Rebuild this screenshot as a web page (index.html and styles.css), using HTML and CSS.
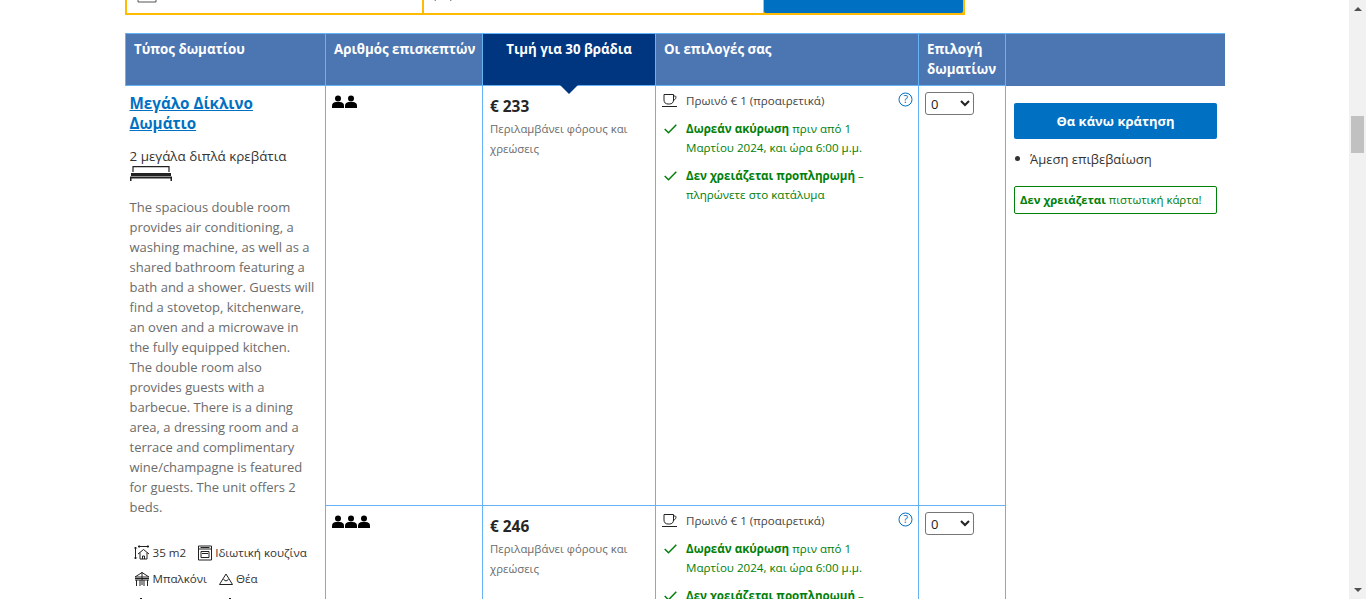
FILE: index.html
```html
<!DOCTYPE html>
<html lang="el">
<head>
<meta charset="utf-8">
<title>Διαθεσιμότητα</title>
<link rel="stylesheet" href="styles.css">
</head>
<body>
<div class="page">
  <main class="content">
    <div class="search">
      <div class="field field-in">
        <svg class="cal" width="20" height="16" viewBox="0 0 20 16"><path d="M1 0v15h18V0M1 5h18M5 8h2M9 8h2M13 8h2M5 11h2M9 11h2" fill="none" stroke="#555" stroke-width="1"/></svg>
        <span class="field-text">Ημερομηνία άφιξης: Πέμπτη, 1 Φεβρ.</span>
      </div>
      <div class="field field-out">
        <svg class="legs" width="18" height="16" viewBox="0 0 18 16"><path d="M5 6 1 15M13 6l4 9" fill="none" stroke="#666" stroke-width="1"/></svg>
        <span class="field-text">Ημερομηνία αναχώρησης, 2 Μαρτίου</span>
      </div>
      <div class="search-btn"></div>
    </div>
    <table class="rooms">
      <colgroup>
        <col class="c1"><col class="c2"><col class="c3"><col class="c4"><col class="c5"><col class="c6">
      </colgroup>
      <thead>
        <tr>
          <th>Τύπος δωματίου</th>
          <th>Αριθμός επισκεπτών</th>
          <th class="th-price">Τιμή για 30 βράδια<span class="notch"></span></th>
          <th>Οι επιλογές σας</th>
          <th>Επιλογή δωματίων</th>
          <th class="th-last"></th>
        </tr>
      </thead>
      <tbody>
        <tr class="row-a">
          <td class="room" rowspan="2">
            <a class="room-name" href="#">Μεγάλο Δίκλινο Δωμάτιο</a>
            <div class="beds">2 μεγάλα διπλά κρεβάτια</div>
            <svg class="bed" width="42" height="15" viewBox="0 0 42 15"><path d="M3 6V.7h36V6" fill="none" stroke="#222" stroke-width="1.2"/><path d="M1 7h40v3H1z" fill="#222"/><path d="M0 10.500h42V15h-1.500v-2.500h-39V15H0z" fill="#222"/></svg>
            <p class="desc">The spacious double room provides air conditioning, a washing machine, as well as a shared bathroom featuring a bath and a shower. Guests will find a stovetop, kitchenware, an oven and a microwave in the fully equipped kitchen. The double room also provides guests with a barbecue. There is a dining area, a dressing room and a terrace and complimentary wine/champagne is featured for guests. The unit offers 2 beds.</p>
            <div class="facs">
              <span class="fac">
                <svg width="16" height="16" viewBox="0 0 16 16"><path d="M1.500 2v12M.3 3.500 1.500 2l1.200 1.500M.3 12.500 1.500 14l1.200-1.500M4 1.500h11M5.500.500 4 1.500l1.500 1M13.500.500 15 1.500l-1.500 1M4 9l5.500-4.500L15 9M6 7.500V14h7V7.500M8.500 14v-3h2v3" fill="none" stroke="#222" stroke-width="1"/></svg>
                35 m2</span>
              <span class="fac">
                <svg width="14" height="16" viewBox="0 0 14 16"><path d="M.5 1h13v14H.5zM.5 4h13M3 6.500h8v6H3zM4 8.500h6M2.500 2.500h9" fill="none" stroke="#222" stroke-width="1"/></svg>
                Ιδιωτική κουζίνα</span>
            </div>
            <div class="facs">
              <span class="fac">
                <svg width="16" height="16" viewBox="0 0 16 16"><path d="M1 6 8 1.500 15 6zM8 1v13M1 9h14M2.500 9v6M6 9v6M10 9v6M13.500 9v6M1 7.500h14" fill="none" stroke="#222" stroke-width="1"/></svg>
                Μπαλκόνι</span>
              <span class="fac">
                <svg width="14" height="14" viewBox="0 0 14 14"><path d="M.5 12.500 7 2l6.500 10.500zM4.500 7.500 7 9l2.500-1.500" fill="none" stroke="#222" stroke-width="1"/></svg>
                Θέα</span>
            </div>
            <div class="facs">
              <span class="fac">
                <svg width="14" height="16" viewBox="0 0 14 16"><path d="M7 1 1 7v8h12V7z" fill="none" stroke="#222" stroke-width="1"/></svg>
                Τηλεόραση</span>
              <span class="fac">
                <svg width="14" height="16" viewBox="0 0 14 16"><path d="M7 1 1 7v8h12V7z" fill="none" stroke="#222" stroke-width="1"/></svg>
                Βεράντα</span>
            </div>
          </td>
          <td class="guests">
            <svg class="people" width="26" height="13" viewBox="0 0 26 13"><g fill="#000"><circle cx="6" cy="3.500" r="3"/><path d="M0 13v-2.500C0 8.500 2 7 4 7h4c2 0 4 1.500 4 3.500V13z"/><circle cx="19" cy="3.500" r="3"/><path d="M13 13v-2.500C13 8.500 15 7 17 7h4c2 0 4 1.500 4 3.500V13z"/></g></svg>
          </td>
          <td class="price">
            <div class="amount">€ 233</div>
            <div class="tax">Περιλαμβάνει φόρους και χρεώσεις</div>
          </td>
          <td class="opts">
            <svg class="help" width="15" height="15" viewBox="0 0 15 15"><circle cx="7.500" cy="7.500" r="6.500" fill="none" stroke="#0071c2" stroke-width="1"/><text x="7.500" y="11" text-anchor="middle" class="help-q">?</text></svg>
            <div class="opt opt-meal">
              <svg class="cup" width="16" height="13" viewBox="0 0 16 13"><path d="M2 .500h9.500V6c0 2.500-1.500 4-4 4H6C3.500 10 2 8.500 2 6zM11.500 2h1.500c1.500 0 1.500 3.500-2 4.500M0 12.500h15" fill="none" stroke="#222" stroke-width="1"/></svg>
              <span>Πρωινό € 1 (προαιρετικά)</span>
            </div>
            <div class="opt opt-good">
              <svg class="chk" width="13" height="10" viewBox="0 0 13 10"><path d="M.700 5 4.500 8.800 12.300.700" fill="none" stroke="#008009" stroke-width="1.500"/></svg>
              <span><b>Δωρεάν ακύρωση</b> πριν από 1 Μαρτίου 2024, και ώρα 6:00 μ.μ.</span>
            </div>
            <div class="opt opt-good">
              <svg class="chk" width="13" height="10" viewBox="0 0 13 10"><path d="M.700 5 4.500 8.800 12.300.700" fill="none" stroke="#008009" stroke-width="1.500"/></svg>
              <span><b>Δεν χρειάζεται προπληρωμή</b> – πληρώνετε στο κατάλυμα</span>
            </div>
          </td>
          <td class="pick"><select class="qty"><option>0</option><option>1</option></select></td>
          <td class="book" rowspan="2">
            <button class="book-btn" type="button">Θα κάνω κράτηση</button>
            <ul class="perks"><li>Άμεση επιβεβαίωση</li></ul>
            <div class="nocard"><b>Δεν χρειάζεται</b> πιστωτική κάρτα!</div>
          </td>
        </tr>
        <tr class="row-b">
          <td class="guests">
            <svg class="people" width="39" height="13" viewBox="0 0 39 13"><g fill="#000"><circle cx="6" cy="3.500" r="3"/><path d="M0 13v-2.500C0 8.500 2 7 4 7h4c2 0 4 1.500 4 3.500V13z"/><circle cx="19" cy="3.500" r="3"/><path d="M13 13v-2.500C13 8.500 15 7 17 7h4c2 0 4 1.500 4 3.500V13z"/><circle cx="32" cy="3.500" r="3"/><path d="M26 13v-2.500C26 8.500 28 7 30 7h4c2 0 4 1.500 4 3.500V13z"/></g></svg>
          </td>
          <td class="price">
            <div class="amount">€ 246</div>
            <div class="tax">Περιλαμβάνει φόρους και χρεώσεις</div>
          </td>
          <td class="opts">
            <svg class="help" width="15" height="15" viewBox="0 0 15 15"><circle cx="7.500" cy="7.500" r="6.500" fill="none" stroke="#0071c2" stroke-width="1"/><text x="7.500" y="11" text-anchor="middle" class="help-q">?</text></svg>
            <div class="opt opt-meal">
              <svg class="cup" width="16" height="13" viewBox="0 0 16 13"><path d="M2 .500h9.500V6c0 2.500-1.500 4-4 4H6C3.500 10 2 8.500 2 6zM11.500 2h1.500c1.500 0 1.500 3.500-2 4.500M0 12.500h15" fill="none" stroke="#222" stroke-width="1"/></svg>
              <span>Πρωινό € 1 (προαιρετικά)</span>
            </div>
            <div class="opt opt-good">
              <svg class="chk" width="13" height="10" viewBox="0 0 13 10"><path d="M.700 5 4.500 8.800 12.300.700" fill="none" stroke="#008009" stroke-width="1.500"/></svg>
              <span><b>Δωρεάν ακύρωση</b> πριν από 1 Μαρτίου 2024, και ώρα 6:00 μ.μ.</span>
            </div>
            <div class="opt opt-good">
              <svg class="chk" width="13" height="10" viewBox="0 0 13 10"><path d="M.700 5 4.500 8.800 12.300.700" fill="none" stroke="#008009" stroke-width="1.500"/></svg>
              <span><b>Δεν χρειάζεται προπληρωμή</b> – πληρώνετε στο κατάλυμα</span>
            </div>
          </td>
          <td class="pick"><select class="qty"><option>0</option><option>1</option></select></td>
        </tr>
      </tbody>
    </table>
  </main>
  <aside class="scrollbar">
    <span class="arrow arrow-up"></span>
    <span class="thumb"></span>
    <span class="arrow arrow-down"></span>
  </aside>
</div>
</body>
</html>
```
FILE: styles.css
```css
* { box-sizing: border-box; }
html, body { margin: 0; height: 599px; overflow: hidden; background: #fff; }
body { font-family: "Open Sans", "Noto Sans", sans-serif; color: #262626; font-size: 13px; }
.page { display: flex; height: 599px; overflow: hidden; }
.content { flex: 1; min-width: 0; padding: 0 124px 0 125px; overflow: hidden; }

.search { display: flex; width: 840px; height: 54px; margin-top: -39px; background: #febb02; padding: 0 2px 2px; gap: 2px; }
.field { background: #fff; display: flex; align-items: flex-end; padding: 0 0 12px 10px; gap: 8px; white-space: nowrap; overflow: hidden; }
.field-in { width: 295px; }
.field-out { width: 339px; }
.field-text { font-size: 13px; line-height: 18px; }
.cal { flex: none; margin-bottom: -2px; }
.legs { flex: none; margin-bottom: -1px; }
.search-btn { flex: 1; background: #0071c2; border-radius: 0 0 2px 2px; margin-left: -1px; }

.rooms { border-collapse: collapse; table-layout: fixed; width: 1099px; margin-top: 18px; }
.c1 { width: 200px; }
.c2 { width: 157px; }
.c3 { width: 173px; }
.c4 { width: 263px; }
.c5 { width: 87px; }
.c6 { width: 219px; }

.rooms th { background: #4c76b2; color: #fff; font-size: 13.3px; font-weight: 700; line-height: 20px; text-align: left; vertical-align: top; padding: 5px 8px 0; height: 52px; border: 1px solid #65b2f7; }
.rooms th:nth-child(n+2) { padding-left: 8px; padding-right: 0; }
.rooms th.th-price { background: #003580; text-align: center; position: relative; padding-right: 8px; }
.rooms .th-last { border-right: 0; border-bottom: 0; }
.notch { position: absolute; left: 50%; bottom: -9px; margin-left: -9px; border: 9px solid transparent; border-bottom: 0; border-top-color: #003580; }

.rooms td { vertical-align: top; border: 1px solid #65b2f7; padding: 0; }
.row-a { height: 420px; }
.row-b { height: 420px; }

.rooms .room { border-left: 0; padding: 7px 10px 0 4px; }
.room-name { display: block; color: #0071c2; font-size: 15.2px; font-weight: 700; line-height: 20px; text-decoration: underline; }
.beds { margin-top: 14px; font-size: 13.4px; line-height: 18px; color: #333; }
.bed { display: block; margin-top: 1px; }
.desc { margin: 16px 0 0; font-size: 13px; line-height: 20px; color: #6b6b6b; }
.facs { display: flex; gap: 12px; margin-top: 8px; font-size: 11.6px; line-height: 18px; padding-left: 4px; white-space: nowrap; color: #333; }
.desc + .facs { margin-top: 27px; }
.fac { display: inline-flex; align-items: center; gap: 3px; }

.guests { padding: 9px 6px 0 !important; }
.people { display: block; }

.price { padding: 9px 7px 0 !important; }
.amount { font-size: 15.4px; font-weight: 700; line-height: 24px; color: #262626; }
.tax { margin-top: 0; font-size: 11.35px; line-height: 20px; color: #6b6b6b; }

.opts { position: relative; padding: 5px 8px 0 7px !important; font-size: 11.6px; }
.help { position: absolute; top: 6px; right: 5px; }
.help-q { font-size: 11px; fill: #0071c2; font-family: "Open Sans", sans-serif; }
.opt { display: flex; align-items: flex-start; gap: 8px; line-height: 19px; margin-bottom: 9px; }
.opt-good { color: #008009; width: 220px; }
.opt-good b { font-weight: 700; }
.opt-meal { color: #444; margin-bottom: 9px; }
.cup { flex: none; margin-top: 3px; margin-right: 0; margin-left: -1px; }
.chk { flex: none; margin: 5px 1px 0 1px; }

.pick { padding: 6px !important; }
.qty { display: block; width: 49px; height: 23px; background: #fff; border: 1px solid #767676; border-radius: 3px; font-family: "Open Sans", sans-serif; font-size: 13px; color: #222; padding: 0 0 0 1px; }

.rooms .book { border-right: 0; border-top: 0; padding: 17px 8px 0; }
.book-btn { display: block; width: 203px; height: 36px; border: 0; border-radius: 2px; background: #0071c2; color: #fff; font-family: inherit; font-size: 13px; font-weight: 700; }
.perks { margin: 11px 0 0; padding: 0; list-style: none; font-size: 13px; line-height: 18px; color: #333; }
.perks li { display: flex; align-items: center; }
.perks li::before { content: ""; width: 5px; height: 5px; border-radius: 50%; background: #333; margin: 0 10px 0 1px; }
.nocard { margin-top: 18px; width: 203px; height: 28px; border: 1px solid #008009; border-radius: 2px; color: #008009; font-size: 11.4px; line-height: 26px; padding-left: 5px; white-space: nowrap; }

.scrollbar { flex: none; width: 17px; height: 599px; background: #f1f1f1; display: flex; flex-direction: column; align-items: center; }
.arrow { flex: none; width: 0; height: 0; border: 4px solid transparent; }
.arrow-up { margin-top: 7px; border-top: 0; border-bottom: 4px solid #505050; }
.thumb { flex: none; width: 13px; height: 37px; margin-top: 105px; background: #c1c1c1; }
.arrow-down { margin-top: auto; margin-bottom: 7px; border-bottom: 0; border-top: 4px solid #505050; }
```
